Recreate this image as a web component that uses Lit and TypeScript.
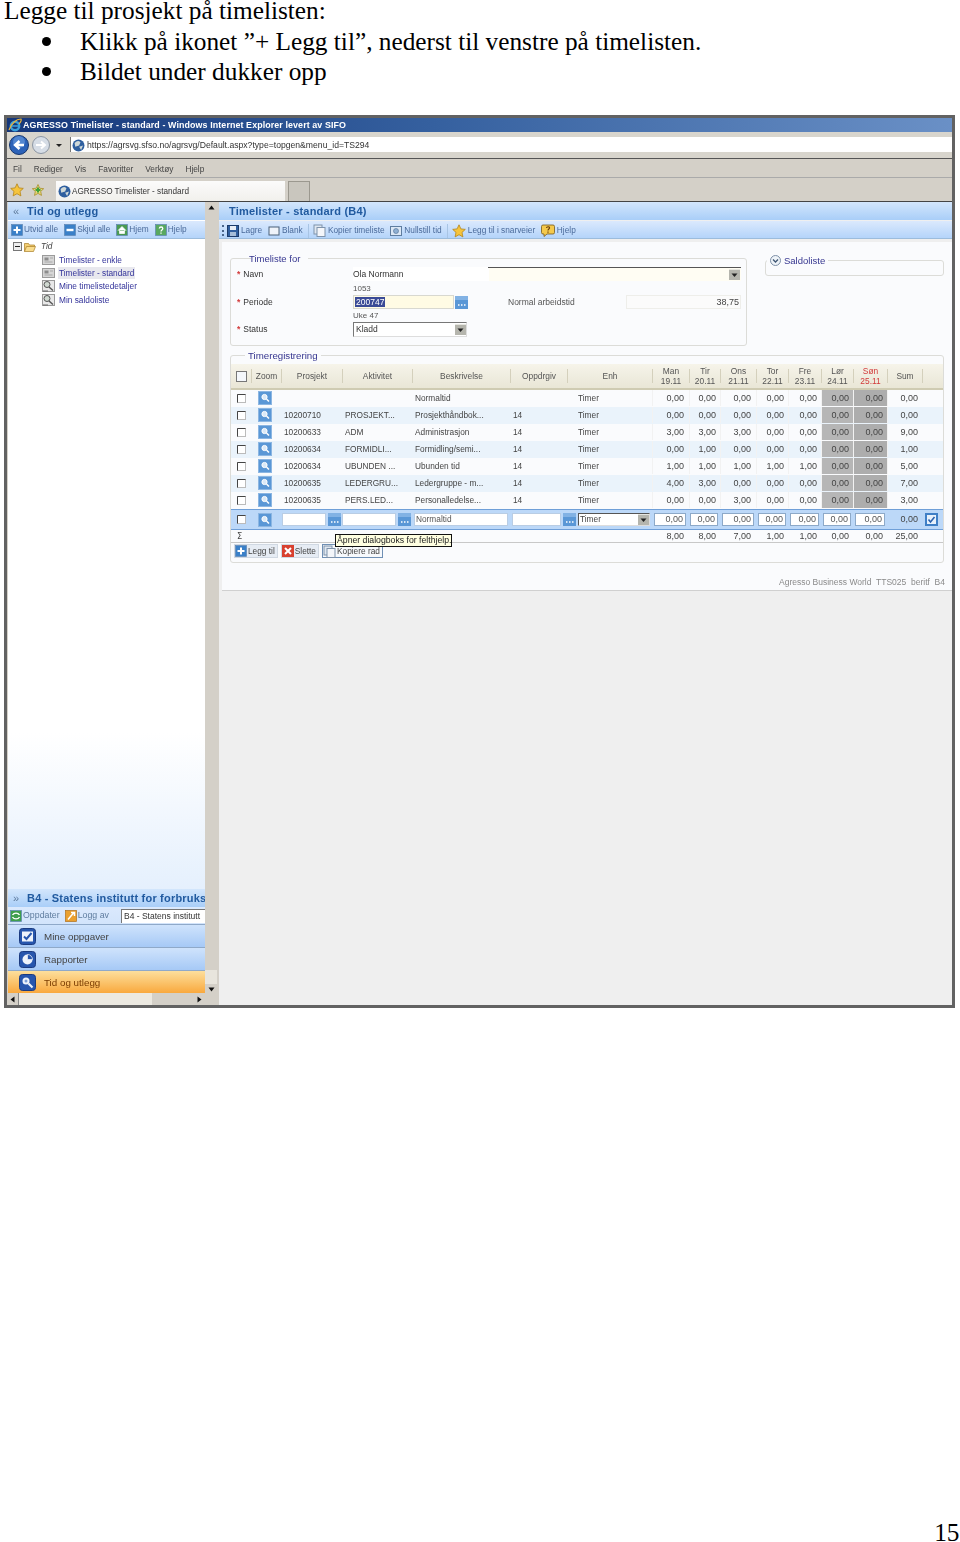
import { LitElement, html, css, svg } from "lit";
import { customElement } from "lit/decorators.js";

const box = (w: number, h: number, body: unknown) =>
  html`<svg class="ic" width=${w} height=${h} viewBox="0 0 ${w} ${h}">${body}</svg>`;

const globe = (s = 14) => box(s, s, svg`<circle cx=${s/2} cy=${s/2} r=${s/2-.5} fill="#2f5f9f"/><path d="M${s*.2} ${s*.3}q${s*.25} -${s*.25} ${s*.45} -${s*.05}l-${s*.1} ${s*.25}l-${s*.3} ${s*.1}z M${s*.55} ${s*.6}l${s*.3} -${s*.1}l-${s*.15} ${s*.35}z" fill="#cfd8d8"/>`);
const ie = () => box(14, 14, svg`<circle cx="7" cy="8" r="4.2" fill="none" stroke="#3aa0dc" stroke-width="2.4"/><path d="M3.5 8h7" stroke="#3aa0dc" stroke-width="1.5"/><path d="M1 12C3 6 8 1 13 1c1 2-1 4-2 5" fill="none" stroke="#e8b23a" stroke-width="1.2"/>`);
const back = () => box(20, 20, svg`<circle cx="10" cy="10" r="9.5" fill="#2c62b8" stroke="#16376f"/><circle cx="10" cy="7" r="6" fill="#6d9ee0" opacity=".6"/><path d="M15 10H7m3.5-4L6 10l4.500 4" fill="none" stroke="#fff" stroke-width="2.400"/>`);
const fwd = () => box(18, 18, svg`<circle cx="9" cy="9" r="8.500" fill="#d6dde6" stroke="#8c96a3"/><path d="M4 9h8m-3-3.500L13 9l-4 3.500" fill="none" stroke="#fff" stroke-width="2"/>`);
const star = () => box(14, 14, svg`<path d="M7 .8l1.900 4.100 4.400.5-3.300 3 .9 4.500L7 10.700 3.100 12.900l.9-4.500-3.300-3 4.400-.5z" fill="#f6c43c" stroke="#b58518" stroke-width=".8"/>`);
const starPlus = () => box(14, 14, svg`<path d="M7 1.500l1.700 3.700 4 .5-3 2.700.8 4L7 10.400l-3.500 2 .8-4-3-2.700 4-.5z" fill="#e9d77a" stroke="#a68e2b" stroke-width=".8"/><path d="M7 4.500v5M4.500 7h5" stroke="#3da23a" stroke-width="2"/>`);
const sq = (fill: string, body: unknown, s = 12) => box(s, s, svg`<rect x=".5" y=".5" width=${s-1} height=${s-1} fill=${fill} stroke="#5f86b4" stroke-width=".7"/>${body}`);
const plus = () => sq("#3a80c8", svg`<path d="M6 2.500v7M2.500 6h7" stroke="#fff" stroke-width="2"/>`);
const minus = () => sq("#3a80c8", svg`<path d="M2.500 6h7" stroke="#fff" stroke-width="2.400"/>`);
const home = () => sq("#4a9a52", svg`<path d="M2 6.500L6 2.500l4 4M3.500 6v3.500h5V6" fill="#fff" stroke="#fff" stroke-width=".7"/>`);
const help = () => sq("#58a860", svg`<path d="M4.300 4.500C4.500 2.500 7.800 2.500 7.800 4.500c0 1.500-1.800 1.500-1.800 3M6 8.500v1.300" fill="none" stroke="#fff" stroke-width="1.300"/>`);
const save = () => box(12, 12, svg`<rect x=".5" y=".5" width="11" height="11" fill="#2f5e9e" stroke="#1c3b6a"/><rect x="3" y="1" width="6" height="4" fill="#e9eef5"/><rect x="3" y="7" width="6" height="4" fill="#a6bdd8"/>`);
const blank = () => box(12, 12, svg`<rect x="1" y="2" width="10" height="8" fill="#eef3fa" stroke="#4b6078"/>`);
const copy = () => box(13, 13, svg`<rect x="1" y="1" width="8" height="9" fill="#dfe7f1" stroke="#7f93ab"/><rect x="4" y="3.500" width="8" height="9" fill="#f4f6fa" stroke="#7f93ab"/>`);
const reset = () => box(12, 12, svg`<rect x=".5" y="1.500" width="11" height="9" fill="#dbe7f5" stroke="#5f7d9f"/><circle cx="6" cy="6" r="2.500" fill="#8fb0d4" stroke="#4b6b90" stroke-width=".6"/>`);
const yhelp = () => box(14, 13, svg`<path d="M2 1h10a1.500 1.500 0 0 1 1.500 1.500v6A1.500 1.500 0 0 1 12 10H6l-3 2.500V10H2A1.500 1.500 0 0 1 .5 8.500v-6A1.500 1.500 0 0 1 2 1z" fill="#f4c94c" stroke="#76591a" stroke-width=".8"/><path d="M5.500 4C5.700 2.300 8.700 2.400 8.500 4 8.400 5.200 7 5 7 6.500M7 7.500V8.700" fill="none" stroke="#6b3e0c" stroke-width="1.200"/>`);
const refresh = () => sq("#3f9e4d", svg`<path d="M2.500 5C4 2.500 8 2.500 9.500 5M9.500 7C8 9.500 4 9.500 2.500 7" fill="none" stroke="#fff" stroke-width="1.400"/>`);
const logoff = () => box(12, 12, svg`<rect x=".5" y=".5" width="11" height="11" fill="#eaa02f" stroke="#b0701a" stroke-width=".7"/><path d="M3 9.500L8.500 3M6 2.500h3.500V6" fill="none" stroke="#fff" stroke-width="1.500"/>`);
const page = () => box(13, 10, svg`<rect x=".5" y=".5" width="12" height="9" fill="#d6d6d6" stroke="#9b9b9b"/><rect x="2.500" y="2.500" width="4" height="3" fill="#8d8d8d"/><path d="M8 3h3M2.500 7h8" stroke="#a8a8a8"/>`);
const mag = () => box(13, 12, svg`<rect x=".5" y=".5" width="12" height="11" fill="#e8e8e8" stroke="#999"/><circle cx="5" cy="4.500" r="3" fill="#cfd8d0" stroke="#555"/><path d="M7 7l4 3.500" stroke="#555" stroke-width="1.400"/><path d="M1 11h5" stroke="#666"/>`);
const folder = () => box(12, 10, svg`<path d="M.5 9.500V1.500h4l1 1.500h5v1.500" fill="#f4cf73" stroke="#a97e26" stroke-width=".7"/><path d="M.5 9.500L2.500 4.500h9l-2 5z" fill="#f9dc8d" stroke="#a97e26" stroke-width=".7"/>`);
const treeMinus = () => box(9, 9, svg`<rect x=".5" y=".5" width="8" height="8" fill="#eee" stroke="#777"/><path d="M2 4.500h5" stroke="#222"/>`);
const zoomBtn = () => box(14, 14, svg`<rect width="14" height="14" fill="#8cb6e2"/><rect x="1" y="1" width="12" height="12" fill="#5a97d6"/><circle cx="6.500" cy="6" r="2.600" fill="#dbe9f7" stroke="#fff"/><path d="M8.500 8l2.500 2.500" stroke="#fff" stroke-width="1.500"/>`);
const dots = () => box(13, 13, svg`<rect width="13" height="13" fill="#5a97d6"/><rect x="0" y="0" width="13" height="4" fill="#82b2e4"/><path d="M3 9h1.500M6 9h1.500M9 9h1.500" stroke="#fff" stroke-width="1.500"/>`);
const cb = () => box(9, 9, svg`<rect x=".5" y=".5" width="8" height="8" fill="#fff" stroke="#bbb"/><path d="M.5 8.500v-8h8" fill="none" stroke="#444"/>`);
const arrowBox = (w = 11) => box(w, 11, svg`<rect width=${w} height="11" fill="#b5b5ad"/><rect x="0" y="0" width=${w} height="1" fill="#e6e6e0"/><path d="M${w/2-3} 4.500h6L${w/2} 8z" fill="#222"/>`);
const blueBig = (body: unknown) => box(17, 17, svg`<rect x=".5" y=".5" width="16" height="16" rx="3" fill="#2756ad" stroke="#1b3b80"/>${body}`);
const bigCheck = () => blueBig(svg`<rect x="3" y="3.500" width="11" height="10" fill="#eef3fb"/><path d="M5 8.500l2.500 2.500L12.500 5" fill="none" stroke="#2756ad" stroke-width="2"/>`);
const bigPie = () => blueBig(svg`<circle cx="8.500" cy="8.500" r="5" fill="#eef3fb"/><path d="M8.500 8.500V3.500a5 5 0 0 1 5 5z" fill="#2756ad" stroke="#fff" stroke-width=".6"/>`);
const bigKey = () => blueBig(svg`<circle cx="7" cy="7" r="3.500" fill="#eef3fb"/><path d="M9.500 9.500l4 4" stroke="#eef3fb" stroke-width="2.200"/><circle cx="7" cy="7" r="1.500" fill="#7da0d8"/>`);
const chk = () => box(13, 13, svg`<rect width="13" height="13" fill="#3f7fc6"/><rect x="2" y="2" width="9" height="9" fill="#e8f1fb"/><path d="M3.500 6.500l2 2.500 4-5" fill="none" stroke="#2b62ad" stroke-width="1.600"/>`);
const circleChev = () => box(11, 11, svg`<circle cx="5.500" cy="5.500" r="5" fill="#eef3f8" stroke="#7d8fa6"/><path d="M3 4.500l2.500 2.500L8 4.500" fill="none" stroke="#3f5673" stroke-width="1.300"/>`);
const xBtn = () => box(12, 12, svg`<rect width="12" height="12" fill="#d8402f"/><path d="M3 3l6 6M9 3l-6 6" stroke="#fff" stroke-width="2"/>`);
const upArrow = () => box(7, 5, svg`<path d="M.5 4.500L3.500 .5l3 4z" fill="#111"/>`);
const downArrow = () => box(7, 5, svg`<path d="M.5 .5L3.500 4.500l3-4z" fill="#111"/>`);
const leftArrow = () => box(5, 7, svg`<path d="M4.500 .5L.5 3.500l4 3z" fill="#111"/>`);
const rightArrow = () => box(5, 7, svg`<path d="M.5 .5L4.500 3.500l-4 3z" fill="#111"/>`);

const rows: string[][] = [
  ["", "", "Normaltid", "", "0,00", "0,00", "0,00", "0,00", "0,00", "0,00", "0,00", "0,00"],
  ["10200710", "PROSJEKT...", "Prosjekthåndbok...", "14", "0,00", "0,00", "0,00", "0,00", "0,00", "0,00", "0,00", "0,00"],
  ["10200633", "ADM", "Administrasjon", "14", "3,00", "3,00", "3,00", "0,00", "0,00", "0,00", "0,00", "9,00"],
  ["10200634", "FORMIDLI...", "Formidling/semi...", "14", "0,00", "1,00", "0,00", "0,00", "0,00", "0,00", "0,00", "1,00"],
  ["10200634", "UBUNDEN ...", "Ubunden tid", "14", "1,00", "1,00", "1,00", "1,00", "1,00", "0,00", "0,00", "5,00"],
  ["10200635", "LEDERGRU...", "Ledergruppe - m...", "14", "4,00", "3,00", "0,00", "0,00", "0,00", "0,00", "0,00", "7,00"],
  ["10200635", "PERS.LED...", "Personalledelse...", "14", "0,00", "0,00", "3,00", "0,00", "0,00", "0,00", "0,00", "3,00"],
];
const days = [["Man", "19.11"], ["Tir", "20.11"], ["Ons", "21.11"], ["Tor", "22.11"], ["Fre", "23.11"], ["Lør", "24.11"], ["Søn", "25.11"]];
const sums = ["8,00", "8,00", "7,00", "1,00", "1,00", "0,00", "0,00", "25,00"];

@customElement("app-root")
export class AppRoot extends LitElement {
  static styles = css`
    :host { display: block; height: 1542px; background: #fff; overflow: hidden; }
    * { box-sizing: border-box; }
    .page { height: 1542px; display: flex; flex-direction: column; font-family: "Liberation Serif", serif; color: #000; }
    .doc { font-size: 25.3px; line-height: 30.5px; padding: 0 0 0 4px; }
    .doc .h { line-height: 20px; margin-bottom: 5.750px; }
    .li { display: flex; align-items: center; }
    .dot { width: 9px; height: 9px; border-radius: 50%; background: #000; margin: 0 29px 0 38px; flex: none; }
    .pageno { margin-top: auto; text-align: right; font-size: 25.3px; line-height: 20px; padding-right: .5px; }
    .win { margin: 28.250px 0 0 4px; width: 951px; height: 893px; border: 3px solid #626262; background: #d4d0c8; display: flex; flex-direction: column; font: 8.3px/11px "Liberation Sans", sans-serif; color: #444; filter: blur(.35px); }
    .ic { display: block; flex: none; }
    .title { height: 14px; background: linear-gradient(90deg, #16377a, #35609f 45%, #6a90c6); color: #fff; font-weight: bold; font-size: 8.900px; letter-spacing: .1px; display: flex; align-items: center; gap: 1px; padding-left: 1px; white-space: nowrap; }
    .nav { height: 27px; display: flex; align-items: center; background: #d8d5cd; border-bottom: 1px solid #555; padding-left: 2px; }
    .nav .fw { margin-left: 3px; }
    .caret { width: 0; height: 0; border: 3px solid transparent; border-top-color: #222; border-bottom: 0; margin: 0 8px 0 6px; }
    .addr { flex: 1; height: 15px; margin-top: -1px; padding-top: 2px; background: #fff; display: flex; align-items: center; gap: 2px; color: #333; padding-left: 1px; border-left: 1px solid #777; font-size: 8.650px; }
    .menu { height: 19px; padding-top: 3px; background: #d4d0c8; border-bottom: 1px solid #aaa; display: flex; align-items: center; padding-left: 6px; gap: 12px; color: #444; }
    .fav { height: 24px; background: #d4d0c8; border-bottom: 1px solid #444; display: flex; align-items: center; padding-left: 3px; }
    .fav .s2 { margin-left: 7px; }
    .tab { margin: 3px 0 0 11px; width: 229px; height: 20px; background: linear-gradient(#fbfbfb, #f1f0ec); display: flex; align-items: center; gap: 1px; padding-left: 2px; color: #333; font-size: 8.200px; }
    .tab2 { margin: 3px 0 0 3px; width: 22px; height: 20px; background: #c9c6be; border: 1px solid #9b988f; border-bottom: 0; }
    .body { flex: 1; display: grid; grid-template-columns: 197px 12px 2px 1fr; padding-left: 1px; min-height: 0; }
    .left { display: flex; flex-direction: column; background: #fff; min-height: 0; min-width: 0; }
    .phead { height: 18px; background: linear-gradient(#d3e6fc, #a9cef8); color: #215a9f; font-size: 11px; letter-spacing: .2px; font-weight: bold; display: flex; align-items: center; white-space: nowrap; overflow: hidden; }
    .left .phead { padding-left: 5px; }
    .chev { color: #5f7b9d; font-weight: normal; width: 14px; flex: none; }
    .ptool { height: 18px; margin-top: 1px; background: linear-gradient(#dbe9fd, #b4d4fa); border-bottom: 1px solid #9cbcdc; display: flex; align-items: center; color: #4a6a9a; white-space: nowrap; overflow: hidden; }
    .ptool span { margin: 0 5.700px 0 2px; }
    .left .ptool { padding-left: 3px; }
    .left .ptool span { margin: 0 6px 0 1px; }
    .tree { flex: 1; padding: 1px 0 0 5px; background: linear-gradient(#fff 0, #fff 76%, #e5f0fd 100%); color: #33339a; }
    .troot { display: flex; align-items: center; gap: 2px; height: 13px; color: #444; font-style: italic; }
    .troot span { margin-left: 3px; }
    .ti { display: flex; align-items: center; height: 13.400px; margin-left: 29px; }
    .ti span { margin-left: 3px; padding: 0 1px 0 1px; line-height: 12px; }
    .ti .sel { background: #e8e8ee; }
    .tool2 { height: 17px; background: linear-gradient(#dbe9fd, #d2e4fb); display: flex; align-items: center; padding-left: 2px; color: #5f7d9f; white-space: nowrap; overflow: hidden; font-size: 8.800px; }
    .tool2 span { margin: 0 5px 0 1px; }
    .sel2 { margin-left: 7px; background: #fff; border: 1px solid #777; border-width: 1px 0 0 1px; height: 14px; flex: 1; padding-left: 2px; color: #333; line-height: 13px; overflow: hidden; font-size: 8.500px; }
    .navb { height: 23px; background: linear-gradient(#cfe3fc, #a6c9f6); border-top: 1px solid #8fa9c9; display: flex; align-items: center; padding-left: 11px; gap: 8px; color: #444; font-size: 9.800px; }
    .navb.on { background: linear-gradient(#fddf9c, #f9a93e); color: #7a3c00; }
    .hs { height: 12px; background: #d4d0c8; display: flex; align-items: center; justify-content: space-between; padding: 0 3px 0 2px; }
    .hs i { flex: 1; height: 100%; margin: 0 3px; background: linear-gradient(90deg, #ece9e1 0, #ece9e1 76%, #d4d0c8 76%); border-left: 1px solid #888; }
    .vs { display: flex; flex-direction: column; background: #d4d0c8; align-items: center; padding-top: 3px; }
    .vs b { display: block; margin-top: auto; width: 100%; height: 14px; background: #e8e5dd; }
    .vs u { display: flex; width: 100%; height: 10px; align-items: center; justify-content: center; margin-bottom: 11px; }
    .right { display: flex; flex-direction: column; background: #efefef; min-width: 0; }
    .right .phead { padding-left: 10px; }
    .right .ptool { padding: 2px 0 0 3px; }
    .ptool .grip { width: 2px; height: 11px; border-left: 2px dotted #49658a; margin: 0 3px 0 0; }
    .ptool .vsep { width: 1px; height: 14px; background: #a8c4e4; margin: 0 3.500px 0 0; }
    .content { margin: 3px 0 0 3px; height: 349px; background: #fafbfd; border-bottom: 1px solid #d0d0d0; padding: 11px 8px 0; position: relative; display: flex; flex-direction: column; }
    fieldset { margin: 0; padding: 0; border: 1px solid #dcdcd8; border-radius: 3px; min-width: 0; }
    legend { font-size: 9.500px; line-height: 11px; color: #35358f; padding: 0 3px; margin-left: 15px; display: flex; align-items: center; gap: 3px; }
    .top { display: flex; gap: 18px; align-items: flex-start; }
    .fs1 { width: 517px; height: 93px; padding: 3px 5px 0 5px; }
    .fs1 legend { margin-left: 15px; transform: translateX(-5px); }
    .fs2 { width: 179px; height: 21px; margin-top: 2px; }
    .fs2 legend { margin-left: 1px; }
    .form { display: grid; grid-template-columns: 117px 101px 54px 118px 115px; grid-template-rows: 14px 14px 14px 13px 15px; align-items: center; font-size: 8.500px; }
    .lab { display: flex; align-items: center; gap: 3px; color: #333; padding-left: 1px; }
    .req { color: #d23a3a; font-weight: bold; }
    .small { font-size: 8px; color: #555; }
    .name { grid-column: 2 / 6; height: 14px; display: flex; align-items: center; justify-content: space-between; padding: 0 1px 0 0; border-top: 1px solid transparent; background: linear-gradient(90deg, #fff 0, #fff 35%, #fffdf3 35%); color: #333; position: relative; }
    .name::before { content: ""; position: absolute; left: 135px; right: 0; top: -1px; height: 1px; background: #555; }
    .name-sel { width: 11px; height: 11px; }
    .per { height: 14px; background: #fffbe4; border: 1px solid #d8d8d0; color: #fff; display: flex; align-items: center; padding-left: 1px; }
    .per em { background: #3a4a96; font-style: normal; line-height: 10px; padding: 0 1px; }
    .perb { display: flex; padding-left: 1px; }
    .stat { grid-column: 2 / 4; width: 114px; height: 15px; border: 1px solid #777; border-bottom-color: #ddd; border-right-color: #ddd; display: flex; align-items: center; justify-content: space-between; padding: 0 0 0 2px; background: #fff; color: #333; }
    .norm { grid-column: 4; padding-left: 0; color: #555; }
    .val { height: 14px; border: 1px solid #eeeeea; text-align: right; padding-right: 1px; line-height: 12px; background: #fbfbfb; color: #444; font-size: 9px; }
    .fs3 { margin-top: 5px; height: 212px; position: relative; padding-top: 4px; }
    .fs3 legend { line-height: 9px; margin-left: 14px; font-size: 9.700px; }
    .grid { display: grid; grid-template-columns: 20px 30px 61px 70px 98px 57px 85px 37px 31px 36px 32px 33px 32px 34px 35px 23px; }
    .hd { height: 26px; background: linear-gradient(#f6f4ea, #e9e6d6); border-bottom: 2px solid #cfcbb2; align-items: center; text-align: center; color: #555; line-height: 10px; font-size: 8.400px; }
    .hd > div { border-left: 1px solid #d4d0bc; height: 14px; display: flex; flex-direction: column; align-items: center; justify-content: center; }
    .hd > .nb { border-left: 0; }
    .hd .allcb { width: 11px; height: 11px; background: #f4f7fb; border: 1px solid #777; }
    .red { color: #d23a3a; }
    .row { height: 17px; align-items: stretch; color: #444; line-height: 16px; }
    .row.alt { background: #eaf3fb; }
    .row > div { height: 16px; display: flex; align-items: center; white-space: nowrap; }
    .c-cb { padding-left: 6px; }
    .c-z { padding-left: 7px; }
    .c-t { padding-left: 3px; }
    .c-u { padding-left: 11px; }
    .n { display: flex; align-items: center; justify-content: flex-end; padding-right: 4px; border-left: 1px solid #f2f2f2; font-size: 9px; }
    .n.m5 { padding-right: 5px; }
    .g1 { background: #b6b6b6; }
    .g2 { background: #adadad; }
    .edit { display: grid; grid-template-columns: 20px 30px 60px 70px 100px 65px 76px 36px 32px 36px 32px 33px 32px 34px 35px 23px; height: 21px; background: #bcd8f8; border-top: 1px solid #6f9fd8; border-bottom: 1px solid #6f9fd8; align-items: center; color: #444; }
    .edit .n { border: 0; }
    .edit .c-ck { padding-left: 3px; }
    .ef { display: flex; align-items: center; gap: 2px; padding-left: 1px; }
    .ef.besk { padding: 0 3px 0 3px; }
    .ef.unit { padding: 0 2px 0 2px; }
    .in { height: 13px; background: #fff; border: 1px solid #b9cde4; line-height: 11px; padding-left: 1px; flex: 1; min-width: 0; color: #555; }
    .ef.num { padding: 0 2px 0 2px; font-size: 9px; }
    .ef.num .in { text-align: right; padding-right: 2px; border-color: #8da9c8; }
    .sel3 { height: 13px; flex: 1; background: #fff; border: 1px solid #555; border-right-color: #ddd; border-bottom-color: #ddd; display: flex; justify-content: space-between; align-items: center; padding-left: 1px; }
    .sumr { height: 13px; border-bottom: 1px solid #c8c8c8; background: #fafbfd; color: #444; align-items: center; line-height: 12px; }
    .sumr .n { border: 0; }
    .sig { padding-left: 6px; font-family: "DejaVu Sans", sans-serif; }
    .btns { display: flex; padding: 1px 0 0 3px; gap: 3px; }
    .bt { height: 14px; display: flex; align-items: center; gap: 1px; padding: 0 2px 0 0; background: #e6ecf4; border: 1px solid #d0d8e2; color: #444; font-size: 8.300px; }
    .bt.hov { background: #f7f9fc; border-color: #6f8fb4; }
    .tip { position: absolute; left: 104px; top: 174px; height: 13px; width: 117px; background: #ffffe1; border: 1px solid #111; color: #222; padding-left: 1px; line-height: 11px; white-space: nowrap; overflow: hidden; font-size: 8.700px; }
    .foot { position: absolute; right: 7px; bottom: 2px; color: #8a8a8a; white-space: pre; font-size: 8.500px; }
  `;

  render() {
    return html`<div class="page">
      <div class="doc">
        <div class="h">Legge til prosjekt på timelisten:</div>
        <div class="li"><span class="dot"></span>Klikk på ikonet ”+ Legg til”, nederst til venstre på timelisten.</div>
        <div class="li"><span class="dot"></span>Bildet under dukker opp</div>
      </div>
      <div class="win">
        <div class="title">${ie()}AGRESSO Timelister - standard - Windows Internet Explorer levert av SIFO</div>
        <div class="nav">
          ${back()}<span class="fw">${fwd()}</span><span class="caret"></span>
          <div class="addr">${globe(13)}https://agrsvg.sfso.no/agrsvg/Default.aspx?type=topgen&menu_id=TS294</div>
        </div>
        <div class="menu"><span>Fil</span><span>Rediger</span><span>Vis</span><span>Favoritter</span><span>Verktøy</span><span>Hjelp</span></div>
        <div class="fav">${star()}<span class="s2">${starPlus()}</span>
          <div class="tab">${globe(13)}AGRESSO Timelister - standard</div><div class="tab2"></div>
        </div>
        <div class="body">
          <div class="left">
            <div class="phead"><span class="chev">«</span>Tid og utlegg</div>
            <div class="ptool">${plus()}<span>Utvid alle</span>${minus()}<span>Skjul alle</span>${home()}<span>Hjem</span>${help()}<span>Hjelp</span></div>
            <div class="tree">
              <div class="troot">${treeMinus()}${folder()}<span>Tid</span></div>
              <div class="ti">${page()}<span>Timelister - enkle</span></div>
              <div class="ti">${page()}<span class="sel">Timelister - standard</span></div>
              <div class="ti">${mag()}<span>Mine timelistedetaljer</span></div>
              <div class="ti">${mag()}<span>Min saldoliste</span></div>
            </div>
            <div class="phead"><span class="chev">»</span>B4 - Statens institutt for forbruks</div>
            <div class="tool2">${refresh()}<span>Oppdater</span>${logoff()}<span>Logg av</span><div class="sel2">B4 - Statens institutt</div></div>
            <div class="navb">${bigCheck()}Mine oppgaver</div>
            <div class="navb">${bigPie()}Rapporter</div>
            <div class="navb on">${bigKey()}Tid og utlegg</div>
            <div class="hs">${leftArrow()}<i></i>${rightArrow()}</div>
          </div>
          <div class="vs">${upArrow()}<b></b><u>${downArrow()}</u></div>
          <div></div>
          <div class="right">
            <div class="phead">Timelister - standard (B4)</div>
            <div class="ptool"><span class="grip"></span>${save()}<span>Lagre</span>${blank()}<span>Blank</span><span class="vsep"></span>${copy()}<span>Kopier timeliste</span>${reset()}<span>Nullstill tid</span><span class="vsep"></span>${star()}<span>Legg til i snarveier</span>${yhelp()}<span>Hjelp</span></div>
            <div class="content">
              <div class="top">
                <fieldset class="fs1"><legend>Timeliste for</legend>
                  <div class="form">
                    <div class="lab"><span class="req">*</span>Navn</div>
                    <div class="name">Ola Normann<span class="name-sel">${arrowBox()}</span></div>
                    <div></div><div class="small">1053</div><div></div><div></div><div></div>
                    <div class="lab"><span class="req">*</span>Periode</div>
                    <div class="per"><em>200747</em></div>
                    <div class="perb">${dots()}</div>
                    <div class="norm">Normal arbeidstid</div>
                    <div class="val">38,75</div>
                    <div></div><div class="small">Uke 47</div><div></div><div></div><div></div>
                    <div class="lab"><span class="req">*</span>Status</div>
                    <div class="stat">Kladd${arrowBox()}</div>
                  </div>
                </fieldset>
                <fieldset class="fs2"><legend>${circleChev()}Saldoliste</legend></fieldset>
              </div>
              <fieldset class="fs3"><legend>Timeregistrering</legend>
                <div class="grid hd">
                  <div class="nb"><span class="allcb"></span></div><div>Zoom</div><div>Prosjekt</div><div>Aktivitet</div><div>Beskrivelse</div><div>Oppdrgiv</div><div>Enh</div>
                  ${days.map(([d, t], i) => html`<div class=${i === 6 ? "red" : ""}><span>${d}</span><span>${t}</span></div>`)}
                  <div>Sum</div><div></div>
                </div>
                ${rows.map((r, i) => html`<div class="grid row ${i % 2 ? "alt" : ""}">
                  <div class="c-cb">${cb()}</div><div class="c-z">${zoomBtn()}</div>
                  <div class="c-t">${r[0]}</div><div class="c-t">${r[1]}</div><div class="c-t">${r[2]}</div><div class="c-t">${r[3]}</div><div class="c-u">Timer</div>
                  ${r.slice(4, 9).map((v, j) => html`<div class="n ${j === 0 || j === 2 ? "m5" : ""}">${v}</div>`)}
                  <div class="n g1">${r[9]}</div><div class="n g2">${r[10]}</div><div class="n">${r[11]}</div><div></div>
                </div>`)}
                <div class="edit">
                  <div class="c-cb">${cb()}</div><div class="c-z">${zoomBtn()}</div>
                  <div class="ef"><div class="in"></div>${dots()}</div>
                  <div class="ef"><div class="in"></div>${dots()}</div>
                  <div class="ef besk"><div class="in">Normaltid</div></div>
                  <div class="ef"><div class="in"></div>${dots()}</div>
                  <div class="ef unit"><div class="sel3">Timer${arrowBox()}</div></div>
                  ${Array.from({ length: 7 }, () => html`<div class="ef num"><div class="in">0,00</div></div>`)}
                  <div class="n">0,00</div><div class="c-ck">${chk()}</div>
                </div>
                <div class="grid sumr">
                  <div class="sig">Σ</div><div></div><div></div><div></div><div></div><div></div><div></div>
                  ${sums.map((v, j) => html`<div class="n ${j === 0 || j === 2 ? "m5" : ""}">${v}</div>`)}<div></div>
                </div>
                <div class="btns">
                  <div class="bt">${plus()}Legg til</div>
                  <div class="bt">${xBtn()}Slette</div>
                  <div class="bt hov">${copy()}Kopiere rad</div>
                </div>
                <div class="tip">Åpner dialogboks for felthjelp.</div>
              </fieldset>
              <div class="foot">Agresso Business World  TTS025  beritf  B4</div>
            </div>
          </div>
        </div>
      </div>
      <div class="pageno">15</div>
    </div>`;
  }
}
